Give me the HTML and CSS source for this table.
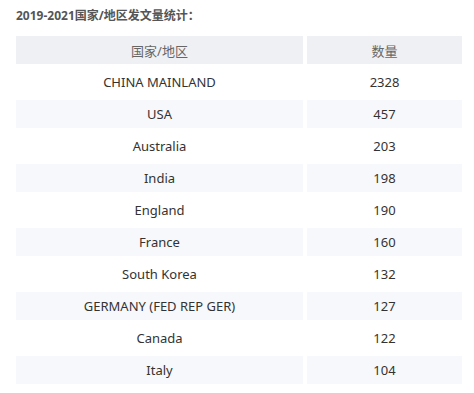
FILE: index.html
```html
<!DOCTYPE html>
<html lang="zh-CN">

<head>
    <meta charset="UTF-8">
    <meta name="viewport" content="width=device-width, initial-scale=1.0">
    <title>国家/地区发文量统计</title>
    <link rel="stylesheet" href="styles.css">
</head>

<body>
    <div class="caption">2019-2021国家/地区发文量统计：</div>
    <table class="stats">
        <thead>
            <tr>
                <th class="country">国家/地区</th>
                <th class="count">数量</th>
            </tr>
        </thead>
        <tbody>
            <tr><td>CHINA MAINLAND</td><td>2328</td></tr>
            <tr><td>USA</td><td>457</td></tr>
            <tr><td>Australia</td><td>203</td></tr>
            <tr><td>India</td><td>198</td></tr>
            <tr><td>England</td><td>190</td></tr>
            <tr><td>France</td><td>160</td></tr>
            <tr><td>South Korea</td><td>132</td></tr>
            <tr><td>GERMANY (FED REP GER)</td><td>127</td></tr>
            <tr><td>Canada</td><td>122</td></tr>
            <tr><td>Italy</td><td>104</td></tr>
        </tbody>
    </table>
</body>

</html>
```

FILE: styles.css
```css
body {
    margin: 0;
    padding: 7px 12px 0 12px;
    font-family: "Noto Sans", "Noto Sans CJK SC", sans-serif;
    font-size: 13px;
    color: #333;
    background: #fff;
}

.caption {
    padding-left: 4px;
    font-size: 12px;
    font-weight: bold;
    color: #555;
    line-height: 18px;
    margin-bottom: 7px;
}

.stats {
    border-collapse: separate;
    border-spacing: 4px;
    width: 454px;
}

.stats th,
.stats td {
    height: 28px;
    padding: 0;
    text-align: center;
    font-weight: normal;
}

.stats th {
    background-color: #eef0f4;
    color: #666;
}

.stats .country {
    width: 287px;
}

.stats tbody tr:nth-child(even) td {
    background-color: #f7f8fb;
}
```
